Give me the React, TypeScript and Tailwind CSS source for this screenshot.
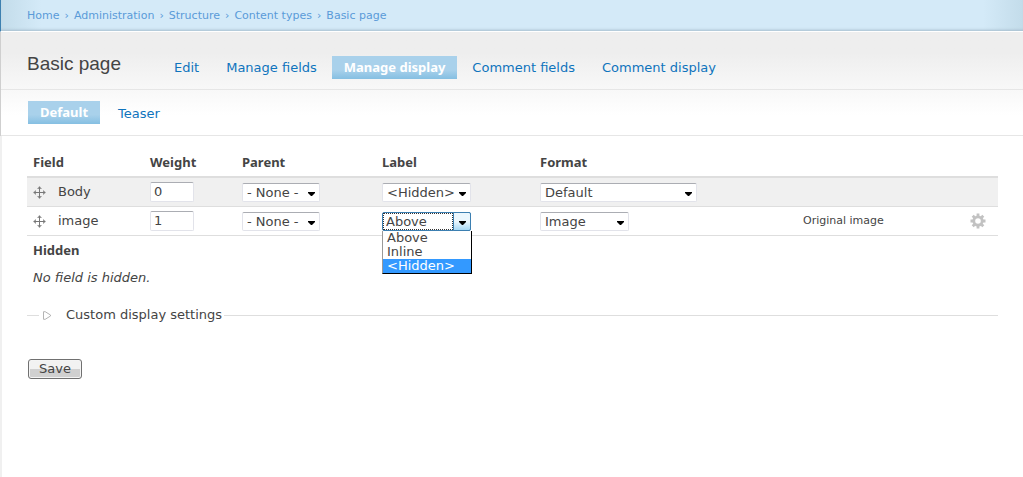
import type { ReactNode } from "react";

const crumbs = ["Home", "Administration", "Structure", "Content types", "Basic page"];

function Crosshair() {
  return (
    <svg width="13" height="13" viewBox="0 0 13 13" className="shrink-0" aria-hidden="true">
      <path d="M6 1h1v11H6zM1 6h11v1H1z" fill="#777" />
      <path d="M6.5 0L9 3H4zM6.5 13L9 10H4zM0 6.5L3 4v5zM13 6.5L10 4v5z" fill="#777" fillOpacity="0.75" />
    </svg>
  );
}

function Gear() {
  return (
    <svg width="16" height="16" viewBox="0 0 16 16" fill="none" stroke="#c2c2c2" aria-hidden="true">
      <circle cx="8" cy="8" r="4.2" strokeWidth="2.8" />
      <path d="M8 .5v2.5M8 13v2.5M.5 8H3M13 8h2.5M2.7 2.7l1.8 1.8M11.5 11.5l1.8 1.8M2.7 13.3l1.8-1.8M11.5 4.5l1.8-1.8" strokeWidth="2.8" />
    </svg>
  );
}

function Select({ label, value, width, open = false }: { label: string; value: string; width: string; open?: boolean }) {
  return (
    <span className={`relative block h-[19px] ${width}`}>
      <select
        aria-label={label}
        defaultValue={value}
        className={`block h-[19px] w-full appearance-none rounded-[2px] border bg-white text-[13px] leading-[17px] text-[#444] outline-none ${
          open ? "border-[#3c7fb1] pl-[3px]" : "border-[#e2e3ea] border-t-[#abadb3] pl-1"
        }`}
      >
        <option>{value}</option>
      </select>
      {open && (
        <>
          <span className="pointer-events-none absolute top-px left-px h-[17px] w-[70px] border border-dotted border-[#333]" />
          <span className="pointer-events-none absolute top-0 right-0 h-[19px] w-[18px] rounded-r-[2px] border border-[#3c7fb1] bg-linear-to-b from-[#eaf6fd] from-50% to-[#a7d9f5]" />
        </>
      )}
      <svg width="7" height="4" viewBox="0 0 7 4" className="pointer-events-none absolute top-[9px] right-[5px]" aria-hidden="true">
        <path d="M0 0h7v1L4 4H3L0 1z" fill="#000" />
      </svg>
    </span>
  );
}

function Row({ name, weight, shaded, children }: { name: string; weight: string; shaded?: boolean; children: ReactNode }) {
  return (
    <tr className={`h-[29px] border-b border-[#dedede] ${shaded ? "bg-[#f0f0f0]" : ""}`}>
      <td className="px-1.5 pt-px">
        <div className="flex items-center gap-3">
          <Crosshair />
          {name}
        </div>
      </td>
      <td className="px-1.5">
        <input
          aria-label={`Weight for ${name}`}
          defaultValue={weight}
          className="block h-5 w-11 rounded-[2px] border border-[#e2e3ea] border-t-[#abadb3] bg-white px-[3px] text-[13px] outline-none"
        />
      </td>
      <td className="px-1.5 pt-px">
        <Select label={`Parent for ${name}`} value="- None -" width="w-[78px]" />
      </td>
      {children}
    </tr>
  );
}

function Tab({ children, active }: { children: ReactNode; active?: boolean }) {
  return (
    <a
      href="#"
      aria-current={active ? "page" : undefined}
      className={`block px-3 ${
        active
          ? "bg-linear-to-b from-[#a9d1eb] from-60% to-[#85bfe2] font-['Noto_Sans','DejaVu_Sans',sans-serif] font-bold text-white"
          : "pt-px text-[#0f74bd]"
      }`}
    >
      {children}
    </a>
  );
}

export default function App() {
  return (
    <div className="flex min-h-screen flex-col bg-white font-['DejaVu_Sans',sans-serif] text-[13px] text-[#444]">
      <header className="flex h-8 items-center border-b border-l border-b-white border-l-[#3d80b0] bg-[linear-gradient(to_right,#c3dcea,#d4eaf8_40px,#d4eaf8_calc(100%_-_40px),#c3dcea)] pl-[26px] shadow-[inset_0_-3px_3px_-2px_#a4bccb]">
        <nav aria-label="Breadcrumb" className="flex pt-px text-[11px] text-[#5a9bd8]">
          {crumbs.map((crumb, i) => (
            <span key={crumb}>
              {i > 0 && <span className="px-[5px]">›</span>}
              <a href="#">{crumb}</a>
            </span>
          ))}
        </nav>
      </header>

      <div className="border-l border-[#cfcfcf] bg-linear-to-b from-[#eeeeee] from-20% to-white to-80%">
        <div className="flex h-[58px] items-start border-b border-[#e6e6e6] pl-[26px]">
          <h1 className="mt-[18px] w-[135px] font-['Liberation_Sans',sans-serif] text-[19px] leading-7 text-[#444]">Basic page</h1>
          <nav aria-label="Primary tabs" className="mt-6 flex gap-[3px] leading-[22px]">
            <Tab>Edit</Tab>
            <Tab>Manage fields</Tab>
            <Tab active>Manage display</Tab>
            <Tab>Comment fields</Tab>
            <Tab>Comment display</Tab>
          </nav>
        </div>
        <nav aria-label="Secondary tabs" className="flex h-[46px] items-center gap-1.5 border-b border-[#e6e6e6] pl-[27px] leading-[23px]">
          <Tab active>Default</Tab>
          <Tab>Teaser</Tab>
        </nav>
      </div>

      <main className="flex-1 border-l-2 border-[#f0f0f0] pr-[25px] pl-[25px]">
        <table className="mt-[11px] w-full table-fixed border-collapse text-left leading-[18px]">
          <thead>
            <tr className="h-[30px] border-b-2 border-[#dedede] font-['Noto_Sans','DejaVu_Sans',sans-serif]">
              <th className="w-[117px] px-1.5">Field</th>
              <th className="w-[92px] px-1.5">Weight</th>
              <th className="w-[140px] px-1.5">Parent</th>
              <th className="w-[158px] px-1.5">Label</th>
              <th className="w-[263px] px-1.5">Format</th>
              <th className="w-[160px]" />
              <th />
            </tr>
          </thead>
          <tbody>
            <Row name="Body" weight="0" shaded>
              <td className="px-1.5 pt-px">
                <Select label="Label for Body" value="<Hidden>" width="w-[89px]" />
              </td>
              <td className="px-1.5 pt-px">
                <Select label="Format for Body" value="Default" width="w-[157px]" />
              </td>
              <td />
              <td />
            </Row>
            <Row name="image" weight="1">
              <td className="px-1.5 pt-px">
                <div className="relative">
                  <Select label="Label for image" value="Above" width="w-[89px]" open />
                  <ul
                    role="listbox"
                    aria-label="Label options"
                    className="absolute top-[19px] left-0 w-[90px] border-r border-b border-l border-r-black border-b-black border-l-[#999] bg-white leading-[14px]"
                  >
                    <li role="option" aria-selected="false" className="px-1">Above</li>
                    <li role="option" aria-selected="false" className="px-1">Inline</li>
                    <li role="option" aria-selected="true" className="bg-[#3399ff] px-1 text-white">{"<Hidden>"}</li>
                  </ul>
                </div>
              </td>
              <td className="px-1.5 pt-px">
                <Select label="Format for image" value="Image" width="w-[89px]" />
              </td>
              <td className="px-1.5 pt-px text-[11px]">Original image</td>
              <td className="px-3">
                <button type="button" aria-label="Edit image settings" className="ml-auto block">
                  <Gear />
                </button>
              </td>
            </Row>
            <tr className="h-[29px]">
              <th colSpan={7} className="px-1.5 font-['Noto_Sans','DejaVu_Sans',sans-serif]">Hidden</th>
            </tr>
            <tr className="h-[27px]">
              <td colSpan={7} className="px-1.5 pt-px italic">No field is hidden.</td>
            </tr>
          </tbody>
        </table>

        <div className="mt-3.5 flex items-center">
          <span className="h-px w-3 bg-[#dedede]" />
          <button type="button" aria-expanded="false" className="flex items-center gap-3.5 pr-0.5 pl-1 leading-5">
            <svg width="9" height="9" viewBox="0 0 9 9" fill="none" stroke="#b4b4b4" aria-hidden="true">
              <path d="M.5.7v7.6h1.7L7.5 5V4L2.2.7z" />
            </svg>
            Custom display settings
          </button>
          <span className="h-px flex-1 bg-[#dedede]" />
        </div>

        <button
          type="button"
          className="mt-[34px] ml-px h-5 rounded-[3px] border border-[#707070] bg-linear-to-b from-[#f2f2f2] from-50% to-[#d0d0d0] to-50% px-2.5 leading-[18px] shadow-[inset_0_0_0_1px_#f4f4f4]"
        >
          Save
        </button>
      </main>
    </div>
  );
}
